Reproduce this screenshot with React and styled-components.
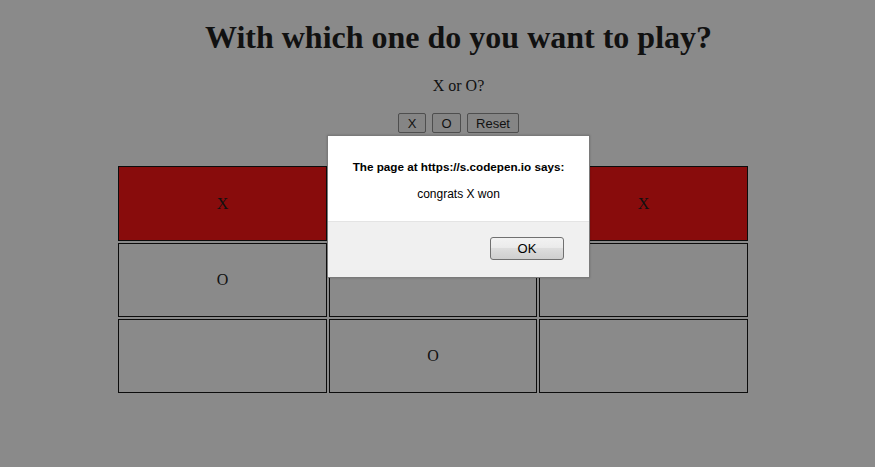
import React from 'react';
import styled, { createGlobalStyle } from 'styled-components';

const GlobalStyle = createGlobalStyle`
  html, body {
    margin: 0;
    padding: 0;
    background: #8a8a8a;
  }
  body {
    font-family: "Liberation Serif", "Times New Roman", serif;
    color: #111;
  }
`;

const Page = styled.div`
  position: relative;
  width: 875px;
  height: 467px;
  overflow: hidden;
`;

const Header = styled.header`
  display: flex;
  flex-direction: column;
  align-items: center;
  padding: 20px 0 0 42px;
`;

const Title = styled.h1`
  margin: 0;
  font-size: 32px;
  font-weight: bold;
  line-height: 35px;
  color: #111;
`;

const Question = styled.p`
  margin: 22px 0 0;
  font-size: 16px;
  line-height: 18px;
`;

const Choices = styled.div`
  display: flex;
  gap: 6px;
  margin-top: 18px;
`;

const ChoiceButton = styled.button`
  height: 20px;
  min-width: ${(p) => p.$w}px;
  padding: 0 8px;
  font-family: "Liberation Sans", Arial, sans-serif;
  font-size: 13px;
  color: #111;
  background: #858585;
  border: 1px solid #4e4e4e;
  border-radius: 2px;
`;

const Board = styled.div`
  display: grid;
  grid-template-columns: 209px 208px 209px;
  grid-template-rows: 75px 74px 74px;
  gap: 2px;
  margin: 33px 0 0 118px;
  width: 630px;
`;

const Cell = styled.div`
  display: flex;
  align-items: center;
  justify-content: center;
  border: 1px solid #0c0c0c;
  background: ${(p) => (p.$win ? '#880c0c' : 'transparent')};
  font-size: 16px;
  color: #111;
`;

const Dialog = styled.div`
  position: absolute;
  left: 327px;
  top: 135px;
  width: 261px;
  border: 1px solid #7a7a7a;
  font-family: "Liberation Sans", Arial, sans-serif;
  font-size: 12px;
  color: #000;
  box-shadow: 0 0 2px rgba(0, 0, 0, 0.2);
`;

const DialogBody = styled.div`
  display: flex;
  flex-direction: column;
  align-items: center;
  height: 86px;
  padding-top: 24px;
  box-sizing: border-box;
  background: #fff;
  border-bottom: 1px solid #e4e4e4;
`;

const DialogTitle = styled.div`
  font-weight: bold;
  font-size: 11.7px;
  line-height: 14px;
`;

const DialogMessage = styled.div`
  margin-top: 13px;
  line-height: 14px;
`;

const DialogFooter = styled.div`
  display: flex;
  justify-content: flex-end;
  height: 55px;
  padding: 15px 25px 0 0;
  box-sizing: border-box;
  background: #f0f0f0;
`;

const OkButton = styled.button`
  width: 74px;
  height: 23px;
  font-family: "Liberation Sans", Arial, sans-serif;
  font-size: 13px;
  color: #000;
  background: linear-gradient(#f2f2f2 0%, #ebebeb 45%, #dddddd 50%, #cfcfcf 100%);
  border: 1px solid #707070;
  border-radius: 3px;
`;

// the middle of the top row sits under the alert, so it is left blank
const board = [
  ['X', '', 'X'],
  ['O', '', ''],
  ['', 'O', ''],
];

export default function App() {
  return (
    <Page>
      <GlobalStyle />
      <Header>
        <Title>With which one do you want to play?</Title>
        <Question>X or O?</Question>
        <Choices>
          <ChoiceButton $w={28}>X</ChoiceButton>
          <ChoiceButton $w={29}>O</ChoiceButton>
          <ChoiceButton $w={52}>Reset</ChoiceButton>
        </Choices>
      </Header>
      <Board>
        {board.map((row, r) =>
          row.map((v, c) => (
            <Cell key={`${r}-${c}`} $win={r === 0}>
              {v}
            </Cell>
          ))
        )}
      </Board>
      <Dialog>
        <DialogBody>
          <DialogTitle>The page at https://s.codepen.io says:</DialogTitle>
          <DialogMessage>congrats X won</DialogMessage>
        </DialogBody>
        <DialogFooter>
          <OkButton>OK</OkButton>
        </DialogFooter>
      </Dialog>
    </Page>
  );
}
